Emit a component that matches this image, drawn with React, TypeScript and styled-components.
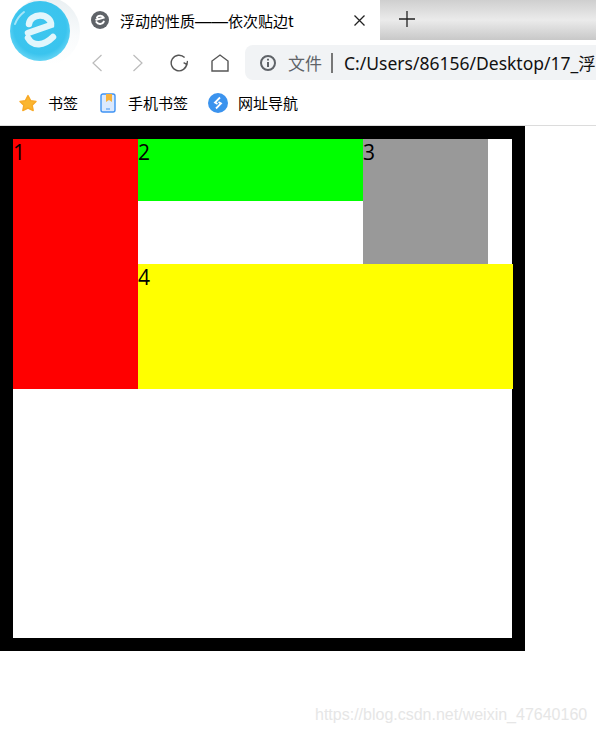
import React from 'react';
import styled, { createGlobalStyle } from 'styled-components';

const GlobalStyle = createGlobalStyle`
  html, body {
    margin: 0;
    padding: 0;
    background: #fff;
  }
  body {
    font-family: "Noto Sans CJK SC", "Noto Sans", sans-serif;
    color: #000;
  }
  svg {
    flex-shrink: 0;
  }
`;

const Page = styled.div`
  position: relative;
  width: 596px;
  height: 733px;
  overflow: hidden;
`;

const Browser = styled.header`
  height: 126px;
  display: flex;
  flex-direction: column;
  box-sizing: border-box;
  border-bottom: 1px solid #dcdcdc;
`;

const TabStrip = styled.div`
  height: 40px;
  display: flex;
`;

const Tab = styled.div`
  width: 380px;
  box-sizing: border-box;
  padding: 0 15px 0 91px;
  display: flex;
  align-items: center;
  background: #fff;
`;

const TabTitle = styled.span`
  flex: 1;
  margin-left: 11px;
  font-size: 15px;
  white-space: nowrap;
`;

const TitleDash = styled.span`
  font-family: "Liberation Sans", sans-serif;
  font-size: 16.5px;
`;

const TabFill = styled.div`
  flex: 1;
  display: flex;
  align-items: center;
  padding: 0 0 2px 19px;
  background: linear-gradient(#cfcfcf 0%, #ebebeb 50%, #c8c8c8 100%);
`;

const Toolbar = styled.div`
  height: 40px;
  padding: 5px 0 0 76px;
  box-sizing: border-box;
  display: flex;
  align-items: center;
`;

const NavButton = styled.div`
  width: 41px;
  display: flex;
  justify-content: center;
`;

const AddressBar = styled.div`
  flex: 1;
  min-width: 0;
  margin-left: 5px;
  height: 35px;
  display: flex;
  align-items: center;
  padding-left: 14px;
  background: #f1f3f5;
  border-radius: 8px 0 0 8px;
  white-space: nowrap;
  overflow: hidden;
`;

const SecurityLabel = styled.span`
  flex-shrink: 0;
  margin-left: 11px;
  font-size: 17px;
  color: #5f6368;
`;

const Divider = styled.span`
  flex-shrink: 0;
  width: 2px;
  height: 20px;
  margin: 0 11px 0 9px;
  background: #777;
`;

const Url = styled.span`
  flex-shrink: 0;
  font-family: "Noto Sans", "Noto Sans CJK SC", sans-serif;
  font-size: 17.5px;
  color: #111;
`;

const Bookmarks = styled.nav`
  flex: 1;
  display: flex;
  align-items: center;
  padding-left: 18px;
  gap: 20px;
`;

const Bookmark = styled.div`
  display: flex;
  align-items: center;
  gap: 10px;
  font-size: 15px;
  line-height: 20px;
`;

const Logo = styled.svg`
  position: absolute;
  left: 0;
  top: 0;
`;

const Outer = styled.div`
  width: 499px;
  height: 499px;
  border: 13px solid #000;
`;

const FloatGrid = styled.div`
  display: grid;
  grid-template-columns: 125px 225px 125px 25px;
  grid-template-rows: 62px 63px 125px;
  width: 500px;
`;

const Block = styled.div<{ $bg: string; $col: string; $row: string }>`
  grid-column: ${(p) => p.$col};
  grid-row: ${(p) => p.$row};
  background: ${(p) => p.$bg};
  font-family: "Open Sans", sans-serif;
  font-size: 21px;
  line-height: 27px;
`;

const Watermark = styled.div`
  position: absolute;
  left: 315px;
  top: 705px;
  font-family: "Liberation Sans", sans-serif;
  font-size: 16px;
  line-height: 20px;
  color: #e6e6e6;
  white-space: nowrap;
`;

const App: React.FC = () => (
  <Page>
    <GlobalStyle />
    <Browser>
      <TabStrip>
        <Tab>
          <svg width="18" height="18" viewBox="0 0 18 18">
            <circle cx="9" cy="9" r="9" fill="#5f6368" />
            <path d="M5.2 8.8 L12.6 6.6 A3.6 3 0 0 0 6 6.4 M5.4 11 A4 3.4 0 0 0 12.8 10.6" fill="none" stroke="#fff" strokeWidth="2" strokeLinecap="round" />
          </svg>
          <TabTitle>浮动的性质<TitleDash>——</TitleDash>依次贴边t</TabTitle>
          <svg width="11" height="11" viewBox="0 0 11 11">
            <path d="M0.5 0.5 L10.5 10.5 M10.5 0.5 L0.5 10.5" stroke="#222" strokeWidth="1.3" />
          </svg>
        </Tab>
        <TabFill>
          <svg width="16" height="16" viewBox="0 0 16 16">
            <path d="M8 0 V16 M0 8 H16" stroke="#222" strokeWidth="1.3" />
          </svg>
        </TabFill>
      </TabStrip>
      <Toolbar>
        <NavButton>
          <svg width="12" height="18" viewBox="0 0 12 18">
            <path d="M10.5 1 L2 9 L10.5 17" fill="none" stroke="#bbb" strokeWidth="1.2" />
          </svg>
        </NavButton>
        <NavButton>
          <svg width="12" height="18" viewBox="0 0 12 18">
            <path d="M1.5 1 L10 9 L1.5 17" fill="none" stroke="#bbb" strokeWidth="1.2" />
          </svg>
        </NavButton>
        <NavButton>
          <svg width="18" height="18" viewBox="0 0 18 18">
            <path d="M14.6 3.6 A7.8 7.8 0 1 0 16.8 9.4" fill="none" stroke="#555" strokeWidth="1.4" />
            <path d="M13.6 8.6 L16.8 10.4 L17.6 6.8" fill="none" stroke="#555" strokeWidth="1.4" />
          </svg>
        </NavButton>
        <NavButton>
          <svg width="18" height="18" viewBox="0 0 18 18">
            <path d="M1 17 V7 L9 1 L17 7 V17 Z" fill="none" stroke="#555" strokeWidth="1.4" />
          </svg>
        </NavButton>
        <AddressBar>
          <svg width="18" height="18" viewBox="0 0 18 18">
            <circle cx="9" cy="9" r="7" fill="none" stroke="#5f6368" strokeWidth="2" />
            <path d="M9 8 V13 M9 4.8 V6.6" stroke="#5f6368" strokeWidth="2" />
          </svg>
          <SecurityLabel>文件</SecurityLabel>
          <Divider />
          <Url>C:/Users/86156/Desktop/17_浮动的性质</Url>
        </AddressBar>
      </Toolbar>
      <Bookmarks>
        <Bookmark>
          <svg width="20" height="18" viewBox="0 0 20 18">
            <path d="M10 1.5 L12.6 6.6 L18 7.4 L14.2 11.3 L15.2 16.5 L10 14 L4.8 16.5 L5.8 11.3 L2 7.4 L7.4 6.6 Z" fill="#fbb62f" stroke="#f8a926" strokeWidth="1.4" strokeLinejoin="round" />
          </svg>
          <span>书签</span>
        </Bookmark>
        <Bookmark>
          <svg width="20" height="20" viewBox="0 0 20 20">
            <rect x="3" y="1" width="14" height="18" rx="2" fill="#dbe9fd" stroke="#3f93f3" strokeWidth="1.4" />
            <path d="M8 1 H14 V9 L11 7 L8 9 Z" fill="#f7b23b" />
            <path d="M8 16 H12" stroke="#3f93f3" />
          </svg>
          <span>手机书签</span>
        </Bookmark>
        <Bookmark>
          <svg width="20" height="20" viewBox="0 0 20 20">
            <circle cx="10" cy="10" r="10" fill="#3b93ee" />
            <path d="M12 4.5 L7 9.5 L9.5 11 M8 15.5 L13 10.5 L10.5 9" fill="none" stroke="#fff" strokeWidth="1.8" />
          </svg>
          <span>网址导航</span>
        </Bookmark>
      </Bookmarks>
    </Browser>
    <Logo width="84" height="70" viewBox="0 0 84 70">
      <defs>
        <radialGradient id="ball" cx="50%" cy="45%" r="58%">
          <stop offset="0%" stopColor="#3fc6ef" />
          <stop offset="75%" stopColor="#3ac4ee" />
          <stop offset="100%" stopColor="#6fd8f6" />
        </radialGradient>
        <linearGradient id="halo" x1="0.7" y1="0" x2="0.5" y2="1">
          <stop offset="0%" stopColor="#e9eff2" />
          <stop offset="50%" stopColor="#f9fbfc" />
          <stop offset="100%" stopColor="#ffffff" />
        </linearGradient>
      </defs>
      <circle cx="46" cy="31" r="34" fill="url(#halo)" />
      <circle cx="40" cy="31" r="30" fill="url(#ball)" />
      <path d="M15 24 A27 27 0 0 1 24 12" fill="none" stroke="#a5e6f8" strokeWidth="2" strokeLinecap="round" />
      <path d="M28 33 L51 25 A11 9 0 0 0 29 24 M28 38 C33 47 44 46 53 37" fill="none" stroke="#e2f6fc" strokeWidth="6.5" strokeLinecap="round" />
    </Logo>
    <Outer>
      <FloatGrid>
        <Block $bg="#f00" $col="1" $row="1 / 4">1</Block>
        <Block $bg="#0f0" $col="2" $row="1">2</Block>
        <Block $bg="#999" $col="3" $row="1 / 3">3</Block>
        <Block $bg="#ff0" $col="2 / 5" $row="3">4</Block>
      </FloatGrid>
    </Outer>
    <Watermark>https://blog.csdn.net/weixin_47640160</Watermark>
  </Page>
);

export default App;
